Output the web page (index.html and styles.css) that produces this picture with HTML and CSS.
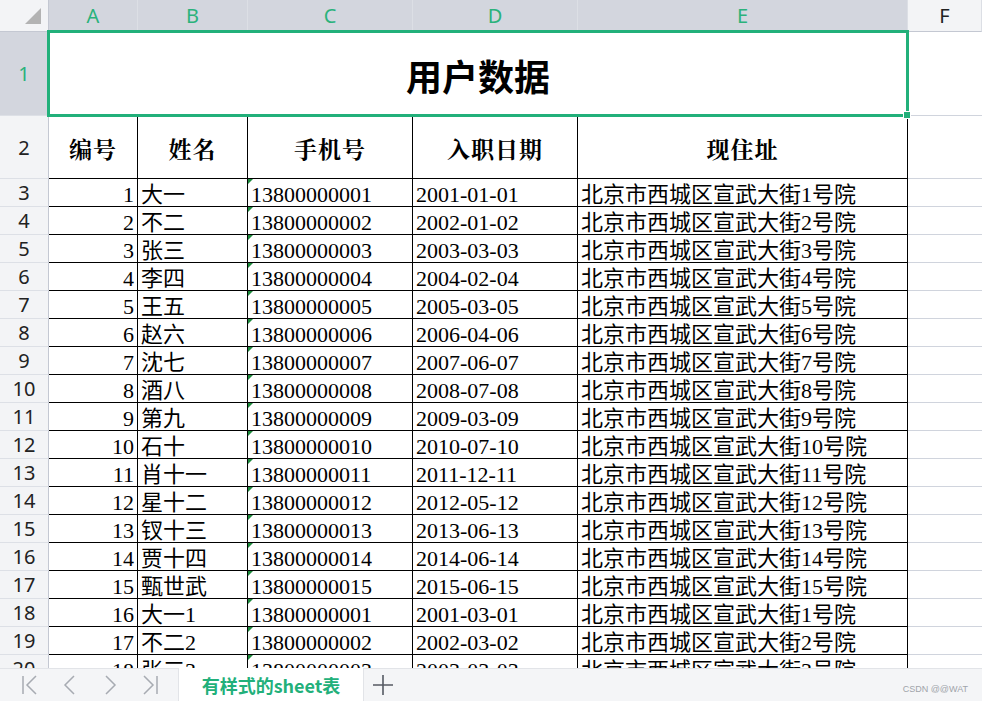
FILE: index.html
```html
<!DOCTYPE html>
<html lang="zh">
<head>
<meta charset="utf-8">
<title>用户数据</title>
<link rel="stylesheet" href="styles.css">
</head>
<body>
<div class="app">
  <div class="sheet">
    <div class="corner"><svg width="16" height="16" viewBox="0 0 16 16"><polygon points="16,0 16,16 0,16" fill="#b3b3b3"/></svg></div>
    <div class="colhead sel">A</div>
    <div class="colhead sel">B</div>
    <div class="colhead sel">C</div>
    <div class="colhead sel">D</div>
    <div class="colhead sel">E</div>
    <div class="colhead">F</div>

    <div class="rowhead sel">1</div>
    <div class="title">用户数据<span class="handle"></span></div>
    <div class="empty"></div>

    <div class="rowhead">2</div>
    <div class="hc">编号</div><div class="hc">姓名</div><div class="hc">手机号</div><div class="hc">入职日期</div><div class="hc">现住址</div>
    <div class="empty"></div>

    <div class="rowhead">3</div><div class="c num">1</div><div class="c">大一</div><div class="c txt">13800000001</div><div class="c">2001-01-01</div><div class="c">北京市西城区宣武大街1号院</div><div class="empty"></div>
    <div class="rowhead">4</div><div class="c num">2</div><div class="c">不二</div><div class="c txt">13800000002</div><div class="c">2002-01-02</div><div class="c">北京市西城区宣武大街2号院</div><div class="empty"></div>
    <div class="rowhead">5</div><div class="c num">3</div><div class="c">张三</div><div class="c txt">13800000003</div><div class="c">2003-03-03</div><div class="c">北京市西城区宣武大街3号院</div><div class="empty"></div>
    <div class="rowhead">6</div><div class="c num">4</div><div class="c">李四</div><div class="c txt">13800000004</div><div class="c">2004-02-04</div><div class="c">北京市西城区宣武大街4号院</div><div class="empty"></div>
    <div class="rowhead">7</div><div class="c num">5</div><div class="c">王五</div><div class="c txt">13800000005</div><div class="c">2005-03-05</div><div class="c">北京市西城区宣武大街5号院</div><div class="empty"></div>
    <div class="rowhead">8</div><div class="c num">6</div><div class="c">赵六</div><div class="c txt">13800000006</div><div class="c">2006-04-06</div><div class="c">北京市西城区宣武大街6号院</div><div class="empty"></div>
    <div class="rowhead">9</div><div class="c num">7</div><div class="c">沈七</div><div class="c txt">13800000007</div><div class="c">2007-06-07</div><div class="c">北京市西城区宣武大街7号院</div><div class="empty"></div>
    <div class="rowhead">10</div><div class="c num">8</div><div class="c">酒八</div><div class="c txt">13800000008</div><div class="c">2008-07-08</div><div class="c">北京市西城区宣武大街8号院</div><div class="empty"></div>
    <div class="rowhead">11</div><div class="c num">9</div><div class="c">第九</div><div class="c txt">13800000009</div><div class="c">2009-03-09</div><div class="c">北京市西城区宣武大街9号院</div><div class="empty"></div>
    <div class="rowhead">12</div><div class="c num">10</div><div class="c">石十</div><div class="c txt">13800000010</div><div class="c">2010-07-10</div><div class="c">北京市西城区宣武大街10号院</div><div class="empty"></div>
    <div class="rowhead">13</div><div class="c num">11</div><div class="c">肖十一</div><div class="c txt">13800000011</div><div class="c">2011-12-11</div><div class="c">北京市西城区宣武大街11号院</div><div class="empty"></div>
    <div class="rowhead">14</div><div class="c num">12</div><div class="c">星十二</div><div class="c txt">13800000012</div><div class="c">2012-05-12</div><div class="c">北京市西城区宣武大街12号院</div><div class="empty"></div>
    <div class="rowhead">15</div><div class="c num">13</div><div class="c">钗十三</div><div class="c txt">13800000013</div><div class="c">2013-06-13</div><div class="c">北京市西城区宣武大街13号院</div><div class="empty"></div>
    <div class="rowhead">16</div><div class="c num">14</div><div class="c">贾十四</div><div class="c txt">13800000014</div><div class="c">2014-06-14</div><div class="c">北京市西城区宣武大街14号院</div><div class="empty"></div>
    <div class="rowhead">17</div><div class="c num">15</div><div class="c">甄世武</div><div class="c txt">13800000015</div><div class="c">2015-06-15</div><div class="c">北京市西城区宣武大街15号院</div><div class="empty"></div>
    <div class="rowhead">18</div><div class="c num">16</div><div class="c">大一1</div><div class="c txt">13800000001</div><div class="c">2001-03-01</div><div class="c">北京市西城区宣武大街1号院</div><div class="empty"></div>
    <div class="rowhead">19</div><div class="c num">17</div><div class="c">不二2</div><div class="c txt">13800000002</div><div class="c">2002-03-02</div><div class="c">北京市西城区宣武大街2号院</div><div class="empty"></div>
    <div class="rowhead">20</div><div class="c num">18</div><div class="c">张三3</div><div class="c txt">13800000003</div><div class="c">2003-03-03</div><div class="c">北京市西城区宣武大街3号院</div><div class="empty"></div>
  </div>

  <div class="tabbar">
    <div class="nav">
      <svg width="20" height="22" viewBox="0 0 20 22"><path d="M3 2v18M16 2L7 11l9 9" fill="none" stroke="#a7abb2" stroke-width="1.5"/></svg>
      <svg width="20" height="22" viewBox="0 0 20 22"><path d="M14 2L5 11l9 9" fill="none" stroke="#a7abb2" stroke-width="1.5"/></svg>
      <svg width="20" height="22" viewBox="0 0 20 22"><path d="M6 2l9 9-9 9" fill="none" stroke="#a7abb2" stroke-width="1.5"/></svg>
      <svg width="20" height="22" viewBox="0 0 20 22"><path d="M4 2l9 9-9 9M17 2v18" fill="none" stroke="#a7abb2" stroke-width="1.5"/></svg>
    </div>
    <div class="tab">有样式的sheet表</div>
    <div class="add"><svg width="22" height="22" viewBox="0 0 22 22"><path d="M11 1v20M1 11h20" stroke="#555a63" stroke-width="1.6"/></svg></div>
    <div class="mark">CSDN @@WAT</div>
  </div>
</div>
</body>
</html>
```

FILE: styles.css
```css
html, body {
  margin: 0;
  padding: 0;
  background: #ffffff;
  overflow: hidden;
}

.app {
  width: 982px;
  height: 701px;
  display: flex;
  flex-direction: column;
}

.sheet {
  flex: 1;
  overflow: hidden;
  display: grid;
  grid-template-columns: 49px 89px 110px 165px 165px 330px 74px;
  grid-template-rows: 32px 84px 63px;
  grid-auto-rows: 28px;
  font-family: "Liberation Serif", "Noto Sans CJK SC", serif;
  font-size: 22px;
  color: #000;
}

.sheet > div {
  box-sizing: border-box;
}

.corner {
  background: #f3f4f6;
  border-right: 1px solid #c4c8d2;
  border-bottom: 1px solid #c4c8d2;
  display: flex;
  align-items: flex-end;
  justify-content: flex-end;
  padding: 0 7px 7px 0;
}

.colhead {
  background: #f3f4f6;
  border-bottom: 1px solid #c4c8d2;
  border-right: 1px solid #dcdfe5;
  display: flex;
  align-items: center;
  justify-content: center;
  font-family: "Noto Sans", "Liberation Sans", sans-serif;
  font-size: 20px;
  color: #222;
}

.colhead.sel {
  background: #d3d6de;
  color: #2ab27b;
}

.rowhead {
  background: #f3f4f6;
  border-right: 1px solid #c4c8d2;
  border-bottom: 1px solid #dde0e6;
  display: flex;
  align-items: center;
  justify-content: center;
  font-family: "Noto Sans", "Liberation Sans", sans-serif;
  font-size: 20px;
  color: #222;
}

.rowhead.sel {
  background: #d3d6de;
  color: #2ab27b;
}

.title {
  grid-column: 2 / 7;
  position: relative;
  border-right: 1px solid #000;
  border-bottom: 1px solid #000;
  display: flex;
  align-items: center;
  justify-content: center;
  padding-top: 2px;
  font-family: "Noto Sans CJK SC", sans-serif;
  font-weight: 700;
  font-size: 36px;
}

.title::after {
  content: "";
  position: absolute;
  left: -2px;
  top: -2px;
  right: -2px;
  bottom: -2px;
  border: 3px solid #22b07a;
}

.handle {
  position: absolute;
  right: -4px;
  bottom: -4px;
  width: 6px;
  height: 6px;
  background: #22b07a;
  border: 1px solid #fff;
  z-index: 2;
}

.empty {
  border-bottom: 1px solid #d0d4dd;
}

.hc {
  border-right: 1px solid #000;
  border-bottom: 1px solid #000;
  display: flex;
  align-items: center;
  justify-content: center;
  padding-top: 2px;
  font-family: "Noto Serif CJK SC", "Noto Sans CJK SC", serif;
  font-weight: 700;
  font-size: 23px;
  letter-spacing: 1px;
}

.c {
  border-right: 1px solid #000;
  border-bottom: 1px solid #000;
  padding: 2px 3px 0;
  line-height: 28px;
  white-space: nowrap;
  overflow: hidden;
}

.c.num {
  text-align: right;
}

.c.txt {
  position: relative;
}

.c.txt::before {
  content: "";
  position: absolute;
  left: 0;
  top: 0;
  border-top: 5px solid #1d8a3c;
  border-right: 5px solid transparent;
}

.tabbar {
  height: 33px;
  flex: none;
  background: #f4f5f7;
  border-top: 1px solid #e2e4e8;
  display: flex;
  align-items: stretch;
  box-sizing: border-box;
  font-family: "Noto Sans CJK SC", sans-serif;
}

.nav {
  display: flex;
  align-items: center;
  gap: 20px;
  padding-left: 20px;
  width: 158px;
}

.tab {
  width: 184px;
  background: #ffffff;
  border-left: 1px solid #e2e4e8;
  border-right: 1px solid #e2e4e8;
  margin-top: -1px;
  display: flex;
  align-items: center;
  justify-content: center;
  color: #22b07a;
  font-weight: 700;
  font-size: 18px;
}

.add {
  display: flex;
  align-items: center;
  padding-left: 8px;
}

.mark {
  margin-left: auto;
  margin-right: 14px;
  align-self: center;
  padding-top: 8px;
  font-family: "Liberation Sans", sans-serif;
  font-size: 9px;
  color: #a0a4aa;
}
```
